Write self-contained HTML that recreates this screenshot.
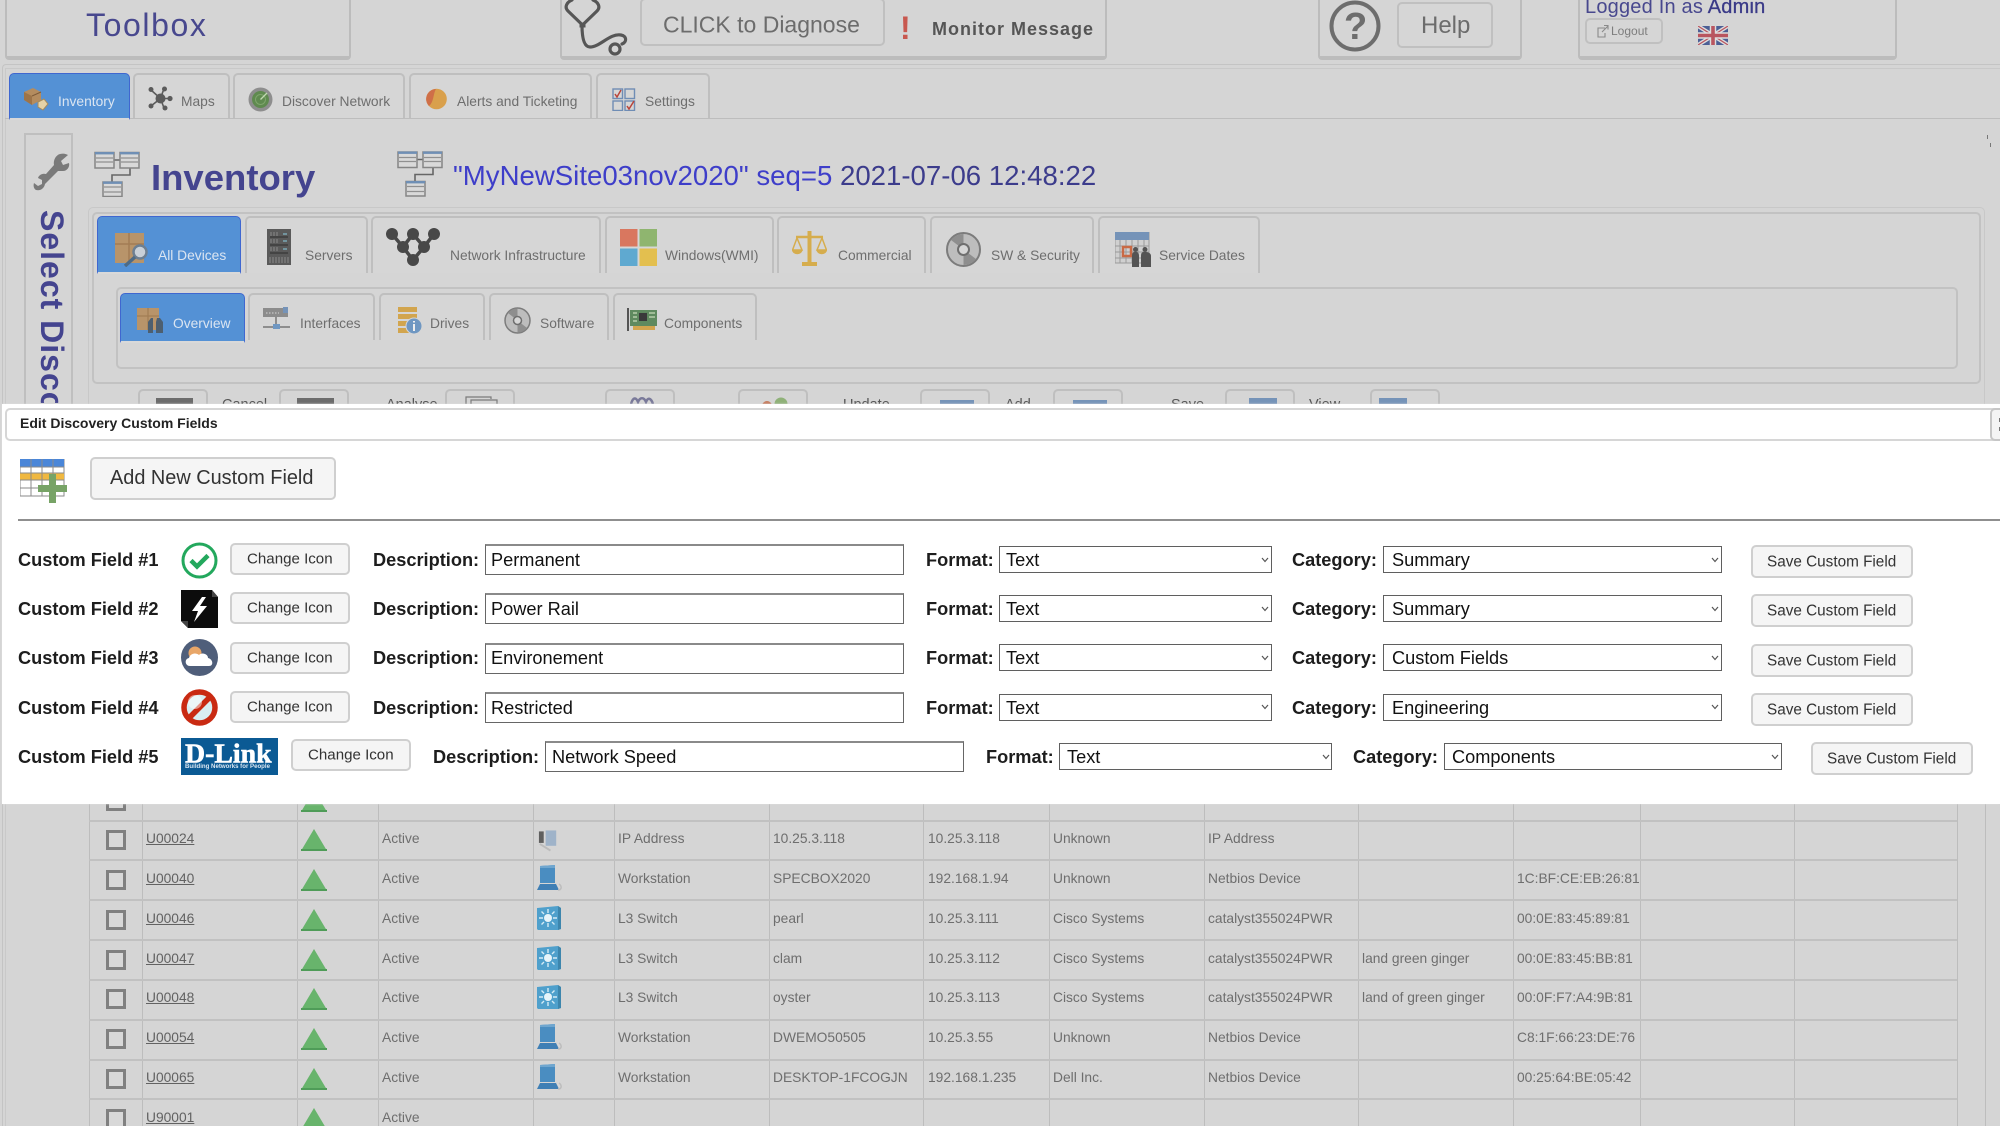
<!DOCTYPE html>
<html><head><meta charset="utf-8"><title>Inventory</title>
<style>
html,body{margin:0;padding:0;width:2000px;height:1126px;overflow:hidden;background:#d5d5d5}
body{position:relative;font-family:"Liberation Sans",Arial,sans-serif}
.b,.x,svg.a,.r span,.r svg{position:absolute}
.x{white-space:nowrap;line-height:1;transform:translateY(-50%)}
.b{box-sizing:border-box}
.box{border:2px solid #bcbcbc;border-top:0;border-bottom-width:4px;border-radius:0 0 4px 4px;top:0;height:60px}
.btn{border:2px solid #c0c0c0;border-radius:5px;background:#d6d6d6}
.tab{border:2px solid #bfbfbf;border-bottom:0;border-radius:5px 5px 0 0;background:#d6d6d6}
.on{background:#5491d5;border:1px solid #3f67d0;border-bottom:2px solid #d9d9d9}
.tx{font-size:13.8px;color:#6e6e6e}
.wt{font-size:13.8px;color:#dbe5f1}
.tool{border:2px solid #bfbfbf;border-bottom:0;border-radius:5px 5px 0 0;top:389px;height:16px;width:70px}
.hl{left:89px;width:1868px;height:2px;background:#c1c1c1}
.vl{top:804px;height:322px;width:1px;background:#bdbdbd}
.r{position:absolute;left:0;width:2000px;height:0}
.r span{top:-7px;font-size:13.8px;line-height:14px;color:#6e6e6e;white-space:nowrap}
.r .ck{left:106px;top:-9px;width:20px;height:20px;box-sizing:border-box;border:3px solid #808080;background:#d8d8d8}
.r .u{left:146px;color:#626262;text-decoration:underline}
.r .st{left:382px}.r .ty{left:618px}.r .nm{left:773px}.r .ip{left:928px}.r .vn{left:1053px}.r .md{left:1208px}.r .lc{left:1362px}.r .mc{left:1517px}
.r svg.tr{left:301px;top:-10px}
.r svg.dv{left:537px;top:-14px}
#modal{position:absolute;left:2px;top:404px;width:1998px;height:400px;background:#fff}
.mb{position:absolute;box-sizing:border-box;background:#f5f5f5;border:2px solid #cfcfcf;border-radius:5px}
.lab{font-size:18.2px;font-weight:bold;color:#1d1d1d}
.val{font-size:18.2px;color:#111}
.bt{font-size:15.1px;color:#333}
.inp{position:absolute;box-sizing:border-box;background:#fff;border:1px solid #666;border-top-width:2px;border-top-color:#8a8a8a}
.sel{position:absolute;box-sizing:border-box;background:#fff;border:1px solid #5f5f5f;height:27px}
.chev{position:absolute}
</style></head>
<body>
<svg width="0" height="0" style="position:absolute">
<defs>
<symbol id="tree" viewBox="0 0 46 46">
<path d="M20 9H26M36 17V24H18V31" fill="none" stroke="#666" stroke-width="1.6"/>
<g fill="#d9d9d9" stroke="#858585" stroke-width="1.5">
<rect x="1" y="1.5" width="19" height="15.5"/><rect x="26" y="1.5" width="19" height="15.5"/><rect x="9" y="31" width="19" height="14.5"/></g>
<g fill="#6f8fb5"><rect x="1" y="1" width="19" height="2.4"/><rect x="26" y="1" width="19" height="2.4"/><rect x="9" y="30.5" width="19" height="2.4"/></g>
<path d="M2 7H19M2 11H19M27 7H44M27 11H44M10 36H27M10 41H27" stroke="#909090" stroke-width="1.2"/>
</symbol>
<symbol id="wk" viewBox="0 0 25 26">
<path d="M3 1L18 0V18H3Z" fill="#4a8dc1"/><path d="M3 1L18 0V3H3Z" fill="#6fa6cf"/>
<path d="M0 25L3 19H19L22 25Z" fill="#3f7fb5"/><path d="M21 25C25 25 25 21 22 19" fill="none" stroke="#bdbdbd" stroke-width="1.5"/>
</symbol>
<symbol id="sw" viewBox="0 0 25 26">
<path d="M0 3L21 1L24 3V24L21 25H1L0 24Z" fill="#4fa0cc"/><path d="M21 1L24 3V24L21 25Z" fill="#3d86ad"/>
<g stroke="#d5ecf6" stroke-width="1.4"><path d="M11 4V8M11 18V22M2 13H6M16 13H20M4.5 6.5L7 9M15 17L17.5 19.5M17.5 6.5L15 9M7 17L4.5 19.5"/></g>
<circle cx="11" cy="13" r="4" fill="#e6f4fa"/>
</symbol>
</defs>
</svg>

<!-- header boxes -->
<div class="b box" style="left:5px;width:346px"></div>
<div class="x" style="left:86px;top:25px;font-size:32px;letter-spacing:1.6px;color:#48488e">Toolbox</div>
<div class="b box" style="left:560px;width:547px"></div>
<svg class="a" style="left:560px;top:0" width="75" height="58" viewBox="0 0 75 58"><g fill="none" stroke="#565656" stroke-width="3.2" stroke-linecap="round"><path d="M22.5 25L8 11C4 7 7 2 12 0M22.5 25L37 11C41 7 38 2 33 0"/><path d="M22 25C22 38 24 47 30 47C40 47 50 33 61 35C67 36 67 42 62 44"/><circle cx="55" cy="49" r="5"/></g><rect x="19.5" y="22.5" width="6" height="5" fill="#565656"/></svg>
<div class="b btn" style="left:640px;top:-2px;width:245px;height:48px"></div>
<div class="x" style="left:663px;top:25px;font-size:23px;color:#6c6c6c">CLICK to Diagnose</div>
<div class="x" style="left:900px;top:28px;font-size:32px;font-weight:bold;color:#c8584f">!</div>
<div class="x" style="left:932px;top:29px;font-size:18px;font-weight:bold;letter-spacing:1px;color:#555">Monitor Message</div>
<div class="b box" style="left:1318px;width:204px"></div>
<svg class="a" style="left:1328px;top:-2px" width="54" height="56" viewBox="0 0 54 56"><circle cx="27" cy="28" r="23.5" fill="none" stroke="#6d6d6d" stroke-width="4"/></svg>
<div class="x" style="left:1344px;top:27px;font-size:38px;font-weight:bold;color:#6d6d6d">?</div>
<div class="b btn" style="left:1397px;top:2px;width:96px;height:46px"></div>
<div class="x" style="left:1421px;top:26px;font-size:24px;color:#6c6c6c">Help</div>
<div class="b box" style="left:1578px;width:319px"></div>
<div class="x" style="left:1585px;top:7px;font-size:20px;letter-spacing:.2px;color:#48488e">Logged In as <span style="color:#3a3a88;-webkit-text-stroke:.3px #3a3a88">Admin</span></div>
<div class="b btn" style="left:1585px;top:18px;width:78px;height:26px"></div>
<svg class="a" style="left:1597px;top:24px" width="12" height="14" viewBox="0 0 12 14"><path d="M8 4H1V13H8V9M5 8L11 2M7 1.5H11V5.5" fill="none" stroke="#8a8a8a" stroke-width="1.1"/></svg>
<div class="x" style="left:1611px;top:31px;font-size:12px;color:#7d7d7d">Logout</div>
<svg class="a" style="left:1698px;top:26px" width="30" height="19" viewBox="0 0 30 19"><rect width="30" height="19" fill="#4c5f95"/><path d="M0 0L30 19M30 0L0 19" stroke="#ddd" stroke-width="4"/><path d="M0 0L30 19M30 0L0 19" stroke="#b9555f" stroke-width="1.2"/><path d="M15 0V19M0 9.5H30" stroke="#ddd" stroke-width="6.5"/><path d="M15 0V19M0 9.5H30" stroke="#b9555f" stroke-width="3.6"/></svg>

<!-- frame lines -->
<div class="b" style="left:2px;top:64px;width:1998px;height:1062px;border:1px solid #c4c4c4;border-right:0;border-bottom:0;border-radius:4px 0 0 0"></div>
<div class="b" style="left:5px;top:68px;width:1995px;height:1058px;border-top:1px solid #c9c9c9;border-left:1px solid #c9c9c9"></div>
<div class="b" style="left:5px;top:118px;width:1995px;height:1px;background:#bdbdbd"></div>

<!-- main tabs -->
<div class="b tab on" style="left:9px;top:73px;width:121px;height:47px"></div>
<div class="b tab" style="left:133px;top:73px;width:97px;height:45px"></div>
<div class="b tab" style="left:233px;top:73px;width:172px;height:45px"></div>
<div class="b tab" style="left:409px;top:73px;width:183px;height:45px"></div>
<div class="b tab" style="left:596px;top:73px;width:114px;height:45px"></div>
<div class="x wt" style="left:58px;top:102px">Inventory</div>
<div class="x tx" style="left:181px;top:102px">Maps</div>
<div class="x tx" style="left:282px;top:102px">Discover Network</div>
<div class="x tx" style="left:457px;top:102px">Alerts and Ticketing</div>
<div class="x tx" style="left:645px;top:102px">Settings</div>
<svg class="a" style="left:23px;top:87px" width="26" height="24" viewBox="0 0 26 24"><path d="M1 5L10 1L18 5V13L9 18L1 13Z" fill="#b48c5f"/><path d="M1 5L9 9V18L1 13Z" fill="#9d7449"/><path d="M9 9L18 5" stroke="#7d5a38"/><path d="M15 15L21 12L25 17L20 23L15 20Z" fill="#e3d2a8" stroke="#a78b5a"/></svg>
<svg class="a" style="left:148px;top:86px" width="25" height="25" viewBox="0 0 25 25"><g stroke="#5b5b5b" stroke-width="1.6"><path d="M12.5 12.5L3 4M12.5 12.5L16 2.5M12.5 12.5L22 12.5M12.5 12.5L3 20M12.5 12.5L16 22"/></g><g fill="#5b5b5b"><circle cx="12.5" cy="12.5" r="5"/><circle cx="3" cy="3.5" r="2.5"/><circle cx="16.5" cy="3" r="2.5"/><circle cx="22" cy="12.5" r="2.6"/><circle cx="3" cy="20" r="2.5"/><circle cx="17" cy="22" r="2.5"/></g></svg>
<svg class="a" style="left:248px;top:87px" width="25" height="25" viewBox="0 0 25 25"><circle cx="12.5" cy="12.5" r="12" fill="#8e8e8e"/><circle cx="12.5" cy="12.5" r="8.5" fill="#5f8a4f"/><circle cx="12.5" cy="12.5" r="5" fill="none" stroke="#7fa56d" stroke-width="1"/><path d="M12.5 12.5L19 6" stroke="#c2d8b2" stroke-width="1.300"/></svg>
<svg class="a" style="left:426px;top:88px" width="21" height="22" viewBox="0 0 21 22"><circle cx="10.5" cy="11" r="10.3" fill="#d9a04c"/><path d="M10 1A10 10 0 0 0 3 18C8 14 7 6 10 1Z" fill="#cf6f48"/></svg>
<svg class="a" style="left:612px;top:88px" width="24" height="23" viewBox="0 0 24 23"><g fill="none" stroke="#6f8db5" stroke-width="1.4"><rect x="1" y="1" width="9.5" height="9.5"/><rect x="13" y="1" width="9.5" height="9.5"/><rect x="1" y="13" width="9.5" height="9.5"/><rect x="13" y="13" width="9.5" height="9.5"/></g><path d="M3 6L5 9L9 2M15 18L17 21L22 13" fill="none" stroke="#b9443a" stroke-width="1.5"/></svg>

<!-- side panel -->
<div class="b" style="left:24px;top:133px;width:49px;height:290px;border:2px solid #bfbfbf"></div>
<svg class="a" style="left:33px;top:153px" width="38" height="38" viewBox="0 0 38 38"><path d="M27 1C31 0 33 1 35 2L28 8L30 12L36 10C37 14 34 18 30 18C28 18 26 18 25 18L12 31C11 36 7 38 3 37C1 36 0 33 1 30L5 33L9 31L9 27L5 25C6 22 9 20 13 21L21 12C20 7 23 2 27 1Z" fill="#7a7a7a"/></svg>
<div class="b" style="left:34px;top:210px;width:40px;height:193px;overflow:hidden"><div style="writing-mode:vertical-rl;font-size:32px;font-weight:bold;letter-spacing:1px;line-height:36px;color:#44448f;white-space:nowrap">Select Discovery</div></div>

<!-- headings -->
<svg class="a" style="left:94px;top:151px" width="46" height="46"><use href="#tree"/></svg>
<div class="x" style="left:151px;top:178px;font-size:36.5px;font-weight:bold;color:#44448f">Inventory</div>
<svg class="a" style="left:397px;top:150px" width="46" height="47"><use href="#tree"/></svg>
<div class="x" style="left:453px;top:176px;font-size:27.6px;color:#3e3ec9">"MyNewSite03nov2020" seq=5 <span style="color:#3c3c8c">2021-07-06 12:48:22</span></div>
<div class="b" style="left:1987px;top:135px;width:1px;height:4px;background:#777"></div>
<div class="b" style="left:1990px;top:143px;width:1px;height:4px;background:#777"></div>

<!-- panels -->
<div class="b" style="left:88px;top:207px;width:1897px;height:290px;border:1px solid #c8c8c8;border-radius:5px"></div>
<div class="b" style="left:92px;top:212px;width:1889px;height:172px;border:2px solid #c2c2c2;border-radius:5px"></div>
<div class="b" style="left:116px;top:287px;width:1842px;height:82px;border:2px solid #c2c2c2;border-radius:5px"></div>

<!-- L2 tabs -->
<div class="b tab on" style="left:97px;top:216px;width:144px;height:58px"></div>
<div class="b tab" style="left:245px;top:216px;width:123px;height:57px"></div>
<div class="b tab" style="left:371px;top:216px;width:230px;height:57px"></div>
<div class="b tab" style="left:605px;top:216px;width:169px;height:57px"></div>
<div class="b tab" style="left:777px;top:216px;width:149px;height:57px"></div>
<div class="b tab" style="left:930px;top:216px;width:164px;height:57px"></div>
<div class="b tab" style="left:1098px;top:216px;width:162px;height:57px"></div>
<div class="x wt" style="left:158px;top:256px">All Devices</div>
<div class="x tx" style="left:305px;top:256px">Servers</div>
<div class="x tx" style="left:450px;top:256px">Network Infrastructure</div>
<div class="x tx" style="left:665px;top:256px">Windows(WMI)</div>
<div class="x tx" style="left:838px;top:256px">Commercial</div>
<div class="x tx" style="left:991px;top:256px">SW &amp; Security</div>
<div class="x tx" style="left:1159px;top:256px">Service Dates</div>
<svg class="a" style="left:115px;top:233px" width="36" height="34" viewBox="0 0 36 34"><rect x="0" y="0" width="29" height="30" fill="#b8946a"/><path d="M0 11H29M14 0V30" stroke="#a27d54" stroke-width="1.5"/><circle cx="25" cy="19" r="6.5" fill="#c9d0d8" stroke="#6d7f92" stroke-width="2.5"/><path d="M20 24L10 33" stroke="#4f6b85" stroke-width="3.5"/></svg>
<svg class="a" style="left:267px;top:229px" width="24" height="36" viewBox="0 0 24 36"><rect width="24" height="36" fill="#5a5a5a"/><path d="M3 8H21M3 16H21M3 24H21" stroke="#444" stroke-width="2"/><path d="M4 3V7M7 3V7M10 3V7M4 10V14M7 10V14M10 10V14M4 18V22M7 18V22M10 18V22M3 28V34M6 28V34M9 28V34M12 28V34M15 28V34M18 28V34M21 28V34" stroke="#8a8a8a" stroke-width="1"/><path d="M16 5H20M16 12H20M16 20H20" stroke="#7aa8b5" stroke-width="1.5"/></svg>
<svg class="a" style="left:384px;top:226px" width="60" height="42" viewBox="0 0 60 42"><g stroke="#484848" stroke-width="3.5" fill="none"><path d="M8 8L19 21L29 34L40 21L50 8M29 8L19 21M29 8L40 21"/></g><g fill="#484848"><circle cx="8" cy="8" r="6"/><circle cx="29" cy="8" r="6"/><circle cx="50" cy="8" r="6"/><circle cx="19" cy="21" r="6"/><circle cx="40" cy="21" r="6"/><circle cx="29" cy="34" r="6"/></g></svg>
<svg class="a" style="left:620px;top:229px" width="37" height="37" viewBox="0 0 37 37"><rect width="17.5" height="17.5" fill="#d9775f"/><rect x="19.5" width="17.5" height="17.5" fill="#8fb56f"/><rect y="19.5" width="17.5" height="17.5" fill="#5fa9d0"/><rect x="19.5" y="19.5" width="17.5" height="17.5" fill="#e3bf4f"/></svg>
<svg class="a" style="left:792px;top:231px" width="35" height="35" viewBox="0 0 35 35"><g fill="none" stroke="#d6ad4d" stroke-width="1.5"><path d="M5 7L0.5 19H10ZM30 7L25 19H34.5Z"/></g><path d="M4 6H31" stroke="#d6ad4d" stroke-width="2.5"/><path d="M17.5 0V32" stroke="#d6ad4d" stroke-width="4"/><path d="M0 19A5 4 0 0 0 10.5 19ZM24.5 19A5 4 0 0 0 35 19ZM10 31H25V35H10Z" fill="#d6ad4d"/></svg>
<svg class="a" style="left:946px;top:232px" width="35" height="35" viewBox="0 0 35 35"><circle cx="17.5" cy="17.5" r="16.5" fill="#bdbdbd" stroke="#7c7c7c" stroke-width="2"/><path d="M17.5 17.5L5 8A16 16 0 0 1 17.5 2ZM17.5 17.5L30 27A16 16 0 0 1 17.5 33Z" fill="#8e8e8e"/><circle cx="17.5" cy="17.5" r="5.5" fill="#d6d6d6" stroke="#6f6f6f" stroke-width="2"/></svg>
<svg class="a" style="left:1115px;top:232px" width="36" height="35" viewBox="0 0 36 35"><rect width="34" height="31" fill="#d0d0d0" stroke="#9a9a9a"/><rect width="34" height="8" fill="#7593b8"/><path d="M5 8V31M11 8V31M17 8V31M23 8V31M29 8V31M0 14H34M0 20H34M0 26H34" stroke="#9a9a9a"/><rect x="8" y="15" width="8" height="9" fill="none" stroke="#c96a45" stroke-width="2.5"/><path d="M17 35V24C17 20 19 20 20.5 20C22 20 24 20 24 24V35ZM26 35V24C26 20 28 20 29.5 20C31 20 36 20 36 24V35Z" fill="#545454"/><circle cx="20.5" cy="17.5" r="2.5" fill="#545454"/><circle cx="30" cy="17.5" r="2.5" fill="#545454"/></svg>

<!-- L3 tabs -->
<div class="b tab on" style="left:120px;top:293px;width:125px;height:50px"></div>
<div class="b tab" style="left:248px;top:293px;width:127px;height:47px"></div>
<div class="b tab" style="left:379px;top:293px;width:106px;height:47px"></div>
<div class="b tab" style="left:489px;top:293px;width:120px;height:47px"></div>
<div class="b tab" style="left:613px;top:293px;width:144px;height:47px"></div>
<div class="x wt" style="left:173px;top:324px">Overview</div>
<div class="x tx" style="left:300px;top:324px">Interfaces</div>
<div class="x tx" style="left:430px;top:324px">Drives</div>
<div class="x tx" style="left:540px;top:324px">Software</div>
<div class="x tx" style="left:664px;top:324px">Components</div>
<svg class="a" style="left:137px;top:308px" width="27" height="26" viewBox="0 0 27 26"><rect width="22" height="22" fill="#b8946a"/><path d="M0 8H22M11 0V22" stroke="#a27d54" stroke-width="1.2"/><path d="M11 25V14L14 10H16V25ZM19 25V14L20 10H23L26 14V25Z" fill="#4d5f70"/></svg>
<svg class="a" style="left:263px;top:307px" width="27" height="24" viewBox="0 0 27 24"><rect width="25" height="9" y="1" fill="#8c8c8c"/><rect x="20" y="0" width="5" height="6" fill="#7593b8"/><path d="M3 6H16" stroke="#d6d6d6" stroke-dasharray="1.5 1.5"/><path d="M13 10V20M0 20H27" stroke="#777" stroke-width="1.5"/><rect x="10" y="17" width="7" height="5" fill="#6f97c2"/></svg>
<svg class="a" style="left:398px;top:307px" width="24" height="27" viewBox="0 0 24 27"><g fill="#d2a54e"><rect width="19" height="5"/><rect y="7" width="19" height="5"/><rect y="14" width="19" height="5"/><rect y="21" width="12" height="5"/></g><circle cx="16" cy="19" r="8" fill="#6f97c2" stroke="#d6d6d6"/><path d="M16 14V15.5M16 17V24" stroke="#eee" stroke-width="2"/></svg>
<svg class="a" style="left:504px;top:307px" width="27" height="27" viewBox="0 0 27 27"><circle cx="13.5" cy="13.5" r="12.5" fill="#bdbdbd" stroke="#7c7c7c" stroke-width="1.5"/><path d="M13.5 13.5L4 6A12 12 0 0 1 13.5 1.5ZM13.5 13.5L23 21A12 12 0 0 1 13.5 25.5Z" fill="#8e8e8e"/><circle cx="13.5" cy="13.5" r="4" fill="#d6d6d6" stroke="#6f6f6f" stroke-width="1.5"/></svg>
<svg class="a" style="left:627px;top:308px" width="30" height="23" viewBox="0 0 30 23"><rect x="3" y="2" width="27" height="16" fill="#5f8a5f"/><path d="M1 0V23" stroke="#555" stroke-width="2"/><rect x="12" y="5" width="8" height="8" fill="#3a3a3a"/><rect x="6" y="18" width="22" height="4" fill="#d2a54e"/><path d="M6 5H10M6 9H10M6 13H10M22 5H28M22 9H28" stroke="#c7d9b9" stroke-width="1.3"/></svg>

<!-- toolbar -->
<div class="b tool" style="left:138px"></div><div class="b tool" style="left:279px"></div><div class="b tool" style="left:445px"></div><div class="b tool" style="left:605px"></div><div class="b tool" style="left:738px"></div><div class="b tool" style="left:920px"></div><div class="b tool" style="left:1053px"></div><div class="b tool" style="left:1225px"></div><div class="b tool" style="left:1370px"></div>
<div class="b" style="left:156px;top:398px;width:37px;height:6px;background:#6c6c6c"></div>
<div class="b" style="left:297px;top:398px;width:37px;height:6px;background:#6c6c6c"></div>
<svg class="a" style="left:465px;top:396px" width="33" height="9" viewBox="0 0 33 9"><path d="M1 9V1H26V3M6 9V4H32V9" fill="none" stroke="#7a7a7a" stroke-width="1.2"/></svg>
<svg class="a" style="left:630px;top:396px" width="24" height="9" viewBox="0 0 24 9"><path d="M1 8C3 1 6 1 8 6C10 1 14 1 16 6C18 1 21 2 23 8" fill="none" stroke="#7a7a9a" stroke-width="2.5"/></svg>
<svg class="a" style="left:760px;top:396px" width="30" height="9" viewBox="0 0 30 9"><circle cx="7" cy="10" r="5" fill="#c47a5c"/><circle cx="21" cy="8" r="6.5" fill="#8fb178"/></svg>
<div class="b" style="left:940px;top:400px;width:34px;height:4px;background:#7593b8"></div>
<div class="b" style="left:1073px;top:400px;width:34px;height:4px;background:#7593b8"></div>
<div class="b" style="left:1249px;top:398px;width:28px;height:6px;background:#7593b8"></div>
<div class="b" style="left:1379px;top:398px;width:28px;height:6px;background:#7593b8"></div>
<div class="x tx" style="left:222px;top:405px;color:#555;font-size:14.5px">Cancel</div>
<div class="x tx" style="left:386px;top:405px;color:#555;font-size:14.5px">Analyse</div>
<div class="x tx" style="left:843px;top:405px;color:#555;font-size:14.5px">Update</div>
<div class="x tx" style="left:1005px;top:405px;color:#555;font-size:14.5px">Add</div>
<div class="x tx" style="left:1171px;top:405px;color:#555;font-size:14.5px">Save</div>
<div class="x tx" style="left:1309px;top:405px;color:#555;font-size:14.5px">View</div>

<!-- table -->
<div class="b vl" style="left:89px"></div><div class="b vl" style="left:142px"></div><div class="b vl" style="left:297px"></div><div class="b vl" style="left:378px"></div><div class="b vl" style="left:533px"></div><div class="b vl" style="left:614px"></div><div class="b vl" style="left:769px"></div><div class="b vl" style="left:923px"></div><div class="b vl" style="left:1049px"></div><div class="b vl" style="left:1204px"></div><div class="b vl" style="left:1358px"></div><div class="b vl" style="left:1513px"></div><div class="b vl" style="left:1640px"></div><div class="b vl" style="left:1794px"></div><div class="b vl" style="left:1957px"></div><div class="b vl" style="left:1985px"></div>
<div class="b hl" style="top:820px"></div><div class="b hl" style="top:859px"></div><div class="b hl" style="top:899px"></div><div class="b hl" style="top:939px"></div><div class="b hl" style="top:979px"></div><div class="b hl" style="top:1019px"></div><div class="b hl" style="top:1059px"></div><div class="b hl" style="top:1098px"></div>

<div class="r" style="top:800px"><div class="ck" style="position:absolute"></div><svg class="tr" width="26" height="22" viewBox="0 0 26 22"><path d="M13 0L25.5 21H.5Z" fill="#68b46c"/><rect y="20" width="26" height="2" fill="#4f9c58"/></svg></div>

<div class="r" style="top:839px"><div class="ck" style="position:absolute"></div><span class="u">U00024</span><svg class="tr" width="26" height="22" viewBox="0 0 26 22"><path d="M13 0L25.5 21H.5Z" fill="#68b46c"/><rect y="20" width="26" height="2" fill="#4f9c58"/></svg><span class="st">Active</span><svg class="dv" width="24" height="26" viewBox="0 0 25 26" style="top:-11px"><path d="M2 3H7V15H2Z" fill="#5f5f5f"/><path d="M9 2H20V18H9Z" fill="#9fb3c9"/><path d="M3 16L14 23" stroke="#bbb" stroke-width="2"/></svg><span class="ty">IP Address</span><span class="nm">10.25.3.118</span><span class="ip">10.25.3.118</span><span class="vn">Unknown</span><span class="md">IP Address</span></div>

<div class="r" style="top:879px"><div class="ck" style="position:absolute"></div><span class="u">U00040</span><svg class="tr" width="26" height="22" viewBox="0 0 26 22"><path d="M13 0L25.5 21H.5Z" fill="#68b46c"/><rect y="20" width="26" height="2" fill="#4f9c58"/></svg><span class="st">Active</span><svg class="dv" width="25" height="26"><use href="#wk"/></svg><span class="ty">Workstation</span><span class="nm">SPECBOX2020</span><span class="ip">192.168.1.94</span><span class="vn">Unknown</span><span class="md">Netbios Device</span><span class="mc">1C:BF:CE:EB:26:81</span></div>

<div class="r" style="top:919px"><div class="ck" style="position:absolute"></div><span class="u">U00046</span><svg class="tr" width="26" height="22" viewBox="0 0 26 22"><path d="M13 0L25.5 21H.5Z" fill="#68b46c"/><rect y="20" width="26" height="2" fill="#4f9c58"/></svg><span class="st">Active</span><svg class="dv" width="25" height="26"><use href="#sw"/></svg><span class="ty">L3 Switch</span><span class="nm">pearl</span><span class="ip">10.25.3.111</span><span class="vn">Cisco Systems</span><span class="md">catalyst355024PWR</span><span class="mc">00:0E:83:45:89:81</span></div>

<div class="r" style="top:959px"><div class="ck" style="position:absolute"></div><span class="u">U00047</span><svg class="tr" width="26" height="22" viewBox="0 0 26 22"><path d="M13 0L25.5 21H.5Z" fill="#68b46c"/><rect y="20" width="26" height="2" fill="#4f9c58"/></svg><span class="st">Active</span><svg class="dv" width="25" height="26"><use href="#sw"/></svg><span class="ty">L3 Switch</span><span class="nm">clam</span><span class="ip">10.25.3.112</span><span class="vn">Cisco Systems</span><span class="md">catalyst355024PWR</span><span class="lc">land green ginger</span><span class="mc">00:0E:83:45:BB:81</span></div>

<div class="r" style="top:998px"><div class="ck" style="position:absolute"></div><span class="u">U00048</span><svg class="tr" width="26" height="22" viewBox="0 0 26 22"><path d="M13 0L25.5 21H.5Z" fill="#68b46c"/><rect y="20" width="26" height="2" fill="#4f9c58"/></svg><span class="st">Active</span><svg class="dv" width="25" height="26"><use href="#sw"/></svg><span class="ty">L3 Switch</span><span class="nm">oyster</span><span class="ip">10.25.3.113</span><span class="vn">Cisco Systems</span><span class="md">catalyst355024PWR</span><span class="lc">land of green ginger</span><span class="mc">00:0F:F7:A4:9B:81</span></div>

<div class="r" style="top:1038px"><div class="ck" style="position:absolute"></div><span class="u">U00054</span><svg class="tr" width="26" height="22" viewBox="0 0 26 22"><path d="M13 0L25.5 21H.5Z" fill="#68b46c"/><rect y="20" width="26" height="2" fill="#4f9c58"/></svg><span class="st">Active</span><svg class="dv" width="25" height="26"><use href="#wk"/></svg><span class="ty">Workstation</span><span class="nm">DWEMO50505</span><span class="ip">10.25.3.55</span><span class="vn">Unknown</span><span class="md">Netbios Device</span><span class="mc">C8:1F:66:23:DE:76</span></div>

<div class="r" style="top:1078px"><div class="ck" style="position:absolute"></div><span class="u">U00065</span><svg class="tr" width="26" height="22" viewBox="0 0 26 22"><path d="M13 0L25.5 21H.5Z" fill="#68b46c"/><rect y="20" width="26" height="2" fill="#4f9c58"/></svg><span class="st">Active</span><svg class="dv" width="25" height="26"><use href="#wk"/></svg><span class="ty">Workstation</span><span class="nm">DESKTOP-1FCOGJN</span><span class="ip">192.168.1.235</span><span class="vn">Dell Inc.</span><span class="md">Netbios Device</span><span class="mc">00:25:64:BE:05:42</span></div>

<div class="r" style="top:1118px"><div class="ck" style="position:absolute"></div><span class="u">U90001</span><svg class="tr" width="26" height="22" viewBox="0 0 26 22"><path d="M13 0L25.5 21H.5Z" fill="#68b46c"/><rect y="20" width="26" height="2" fill="#4f9c58"/></svg><span class="st">Active</span></div>

<!-- modal -->
<div style="position:absolute;left:0;top:0;width:2000px;height:1126px;pointer-events:none">
<div id="modal" style="box-shadow:0 0 2px #ddd"></div>
<div class="b" style="left:5px;top:408px;width:2000px;height:33px;border:2px solid #d6d6d6;border-radius:5px 0 0 5px;background:#fff"></div>
<div class="x" style="left:20px;top:423px;font-size:14px;font-weight:bold;color:#222">Edit Discovery Custom Fields</div>
<div class="b" style="left:1990px;top:408px;width:20px;height:33px;border:2px solid #c6c6c6;border-radius:5px;background:#f4f4f4"></div>
<div class="b" style="left:1999px;top:418px;width:2px;height:4px;background:#777"></div>
<div class="b" style="left:1999px;top:427px;width:2px;height:4px;background:#777"></div>

<svg class="a" style="left:20px;top:459px" width="48" height="44" viewBox="0 0 48 44"><rect x="0" y="0" width="44" height="37" fill="#fff" stroke="#8a8a8a"/><rect width="44" height="8" fill="#4a86d8"/><rect y="14" width="44" height="7" fill="#f0b840"/><path d="M0 8H44M0 14H44M0 21H44M0 29H44M11 0V37M22 0V37M33 0V37" stroke="#8a8a8a"/><path d="M29 15H36V26H47V33H36V44H29V33H18V26H29Z" fill="#77a366"/></svg>
<div class="mb" style="left:90px;top:457px;width:246px;height:43px"></div>
<div class="x" style="left:110px;top:479px;font-size:19.9px;color:#333">Add New Custom Field</div>
<div class="b" style="left:18px;top:519px;width:1982px;height:2px;background:#8f8f8f"></div>

<!-- row 1 -->
<div class="x lab" style="left:18px;top:560px">Custom Field #1</div>
<svg class="a" style="left:181px;top:542px" width="37" height="37" viewBox="0 0 37 37"><circle cx="18.5" cy="18.5" r="16.5" fill="#fff" stroke="#23a85d" stroke-width="3"/><path d="M10 18.5L16 24.5L27 13.5" fill="none" stroke="#23a85d" stroke-width="4.5"/></svg>
<div class="mb" style="left:230px;top:543px;width:120px;height:32px"></div>
<div class="x bt" style="left:247px;top:559px">Change Icon</div>
<div class="x lab" style="left:373px;top:560px">Description:</div>
<div class="inp" style="left:485px;top:544px;width:419px;height:31px"></div>
<div class="x val" style="left:491px;top:560px">Permanent</div>
<div class="x lab" style="left:926px;top:560px">Format:</div>
<div class="sel" style="left:999px;top:546px;width:273px"></div>
<div class="x val" style="left:1006px;top:560px">Text</div>
<svg class="chev" style="left:1261px;top:557px" width="8" height="6"><path d="M1 1L4 4.5L7 1" fill="none" stroke="#555" stroke-width="1.2"/></svg>
<div class="x lab" style="left:1292px;top:560px">Category:</div>
<div class="sel" style="left:1383px;top:546px;width:339px"></div>
<div class="x val" style="left:1392px;top:560px">Summary</div>
<svg class="chev" style="left:1711px;top:557px" width="8" height="6"><path d="M1 1L4 4.5L7 1" fill="none" stroke="#555" stroke-width="1.2"/></svg>
<div class="mb" style="left:1751px;top:545px;width:162px;height:33px"></div>
<div class="x bt" style="left:1767px;top:562px;font-size:15.3px">Save Custom Field</div>

<!-- row 2 -->
<div class="x lab" style="left:18px;top:609px">Custom Field #2</div>
<svg class="a" style="left:181px;top:590px" width="37" height="38" viewBox="0 0 37 38"><path d="M0 0H31L37 7V38H7L0 31Z" fill="#0c0c0c"/><path d="M31 0L37 7H31ZM0 31L7 38V31Z" fill="#444"/><path d="M21 7L11 21H17L13 32L26 16H19L25 7Z" fill="#fff"/></svg>
<div class="mb" style="left:230px;top:592px;width:120px;height:32px"></div>
<div class="x bt" style="left:247px;top:608px">Change Icon</div>
<div class="x lab" style="left:373px;top:609px">Description:</div>
<div class="inp" style="left:485px;top:593px;width:419px;height:31px"></div>
<div class="x val" style="left:491px;top:609px">Power Rail</div>
<div class="x lab" style="left:926px;top:609px">Format:</div>
<div class="sel" style="left:999px;top:595px;width:273px"></div>
<div class="x val" style="left:1006px;top:609px">Text</div>
<svg class="chev" style="left:1261px;top:606px" width="8" height="6"><path d="M1 1L4 4.5L7 1" fill="none" stroke="#555" stroke-width="1.2"/></svg>
<div class="x lab" style="left:1292px;top:609px">Category:</div>
<div class="sel" style="left:1383px;top:595px;width:339px"></div>
<div class="x val" style="left:1392px;top:609px">Summary</div>
<svg class="chev" style="left:1711px;top:606px" width="8" height="6"><path d="M1 1L4 4.5L7 1" fill="none" stroke="#555" stroke-width="1.2"/></svg>
<div class="mb" style="left:1751px;top:594px;width:162px;height:33px"></div>
<div class="x bt" style="left:1767px;top:611px;font-size:15.3px">Save Custom Field</div>

<!-- row 3 -->
<div class="x lab" style="left:18px;top:658px">Custom Field #3</div>
<svg class="a" style="left:181px;top:639px" width="37" height="37" viewBox="0 0 37 37"><circle cx="18.5" cy="18.5" r="18.5" fill="#4f5e7a"/><circle cx="14" cy="14" r="6.5" fill="#e8a668"/><path d="M9 27C4 27 3 20 8 19C9 15 14 13 18 16C21 13 27 15 27 19C32 20 33 27 28 27Z" fill="#fff"/></svg>
<div class="mb" style="left:230px;top:642px;width:120px;height:32px"></div>
<div class="x bt" style="left:247px;top:658px">Change Icon</div>
<div class="x lab" style="left:373px;top:658px">Description:</div>
<div class="inp" style="left:485px;top:643px;width:419px;height:31px"></div>
<div class="x val" style="left:491px;top:658px">Environement</div>
<div class="x lab" style="left:926px;top:658px">Format:</div>
<div class="sel" style="left:999px;top:644px;width:273px"></div>
<div class="x val" style="left:1006px;top:658px">Text</div>
<svg class="chev" style="left:1261px;top:655px" width="8" height="6"><path d="M1 1L4 4.5L7 1" fill="none" stroke="#555" stroke-width="1.2"/></svg>
<div class="x lab" style="left:1292px;top:658px">Category:</div>
<div class="sel" style="left:1383px;top:644px;width:339px"></div>
<div class="x val" style="left:1392px;top:658px">Custom Fields</div>
<svg class="chev" style="left:1711px;top:655px" width="8" height="6"><path d="M1 1L4 4.5L7 1" fill="none" stroke="#555" stroke-width="1.2"/></svg>
<div class="mb" style="left:1751px;top:644px;width:162px;height:33px"></div>
<div class="x bt" style="left:1767px;top:661px;font-size:15.3px">Save Custom Field</div>

<!-- row 4 -->
<div class="x lab" style="left:18px;top:708px">Custom Field #4</div>
<svg class="a" style="left:181px;top:689px" width="37" height="37" viewBox="0 0 37 37"><circle cx="18.5" cy="18.5" r="15.5" fill="#d9eef2" stroke="#c92a12" stroke-width="5.5"/><path d="M7.5 29.5L29.5 7.500" stroke="#c92a12" stroke-width="5.5"/><circle cx="14" cy="13" r="7" fill="#fff" opacity=".5"/></svg>
<div class="mb" style="left:230px;top:691px;width:120px;height:32px"></div>
<div class="x bt" style="left:247px;top:707px">Change Icon</div>
<div class="x lab" style="left:373px;top:708px">Description:</div>
<div class="inp" style="left:485px;top:692px;width:419px;height:31px"></div>
<div class="x val" style="left:491px;top:708px">Restricted</div>
<div class="x lab" style="left:926px;top:708px">Format:</div>
<div class="sel" style="left:999px;top:694px;width:273px"></div>
<div class="x val" style="left:1006px;top:708px">Text</div>
<svg class="chev" style="left:1261px;top:704px" width="8" height="6"><path d="M1 1L4 4.5L7 1" fill="none" stroke="#555" stroke-width="1.2"/></svg>
<div class="x lab" style="left:1292px;top:708px">Category:</div>
<div class="sel" style="left:1383px;top:694px;width:339px"></div>
<div class="x val" style="left:1392px;top:708px">Engineering</div>
<svg class="chev" style="left:1711px;top:704px" width="8" height="6"><path d="M1 1L4 4.5L7 1" fill="none" stroke="#555" stroke-width="1.2"/></svg>
<div class="mb" style="left:1751px;top:693px;width:162px;height:33px"></div>
<div class="x bt" style="left:1767px;top:710px;font-size:15.3px">Save Custom Field</div>

<!-- row 5 -->
<div class="x lab" style="left:18px;top:757px">Custom Field #5</div>
<div class="b" style="left:181px;top:738px;width:97px;height:37px;background:#0b5a94"></div>
<div class="x" style="left:185px;top:754px;font-family:'Liberation Serif',serif;font-weight:bold;font-size:27px;color:#fff;-webkit-text-stroke:.6px #fff;transform:translateY(-50%) scaleX(1.03);transform-origin:0 50%">D-Link</div>
<div class="x" style="left:185px;top:767px;font-size:6.1px;font-weight:bold;color:#dbe7f2">Building Networks for People</div>
<div class="mb" style="left:291px;top:739px;width:120px;height:32px"></div>
<div class="x bt" style="left:308px;top:755px">Change Icon</div>
<div class="x lab" style="left:433px;top:757px">Description:</div>
<div class="inp" style="left:545px;top:741px;width:419px;height:31px"></div>
<div class="x val" style="left:552px;top:757px">Network Speed</div>
<div class="x lab" style="left:986px;top:757px">Format:</div>
<div class="sel" style="left:1059px;top:743px;width:273px"></div>
<div class="x val" style="left:1067px;top:757px">Text</div>
<svg class="chev" style="left:1322px;top:754px" width="8" height="6"><path d="M1 1L4 4.5L7 1" fill="none" stroke="#555" stroke-width="1.2"/></svg>
<div class="x lab" style="left:1353px;top:757px">Category:</div>
<div class="sel" style="left:1444px;top:743px;width:338px"></div>
<div class="x val" style="left:1452px;top:757px">Components</div>
<svg class="chev" style="left:1771px;top:754px" width="8" height="6"><path d="M1 1L4 4.5L7 1" fill="none" stroke="#555" stroke-width="1.2"/></svg>
<div class="mb" style="left:1811px;top:742px;width:162px;height:33px"></div>
<div class="x bt" style="left:1827px;top:759px;font-size:15.3px">Save Custom Field</div>
</div>
</body></html>
